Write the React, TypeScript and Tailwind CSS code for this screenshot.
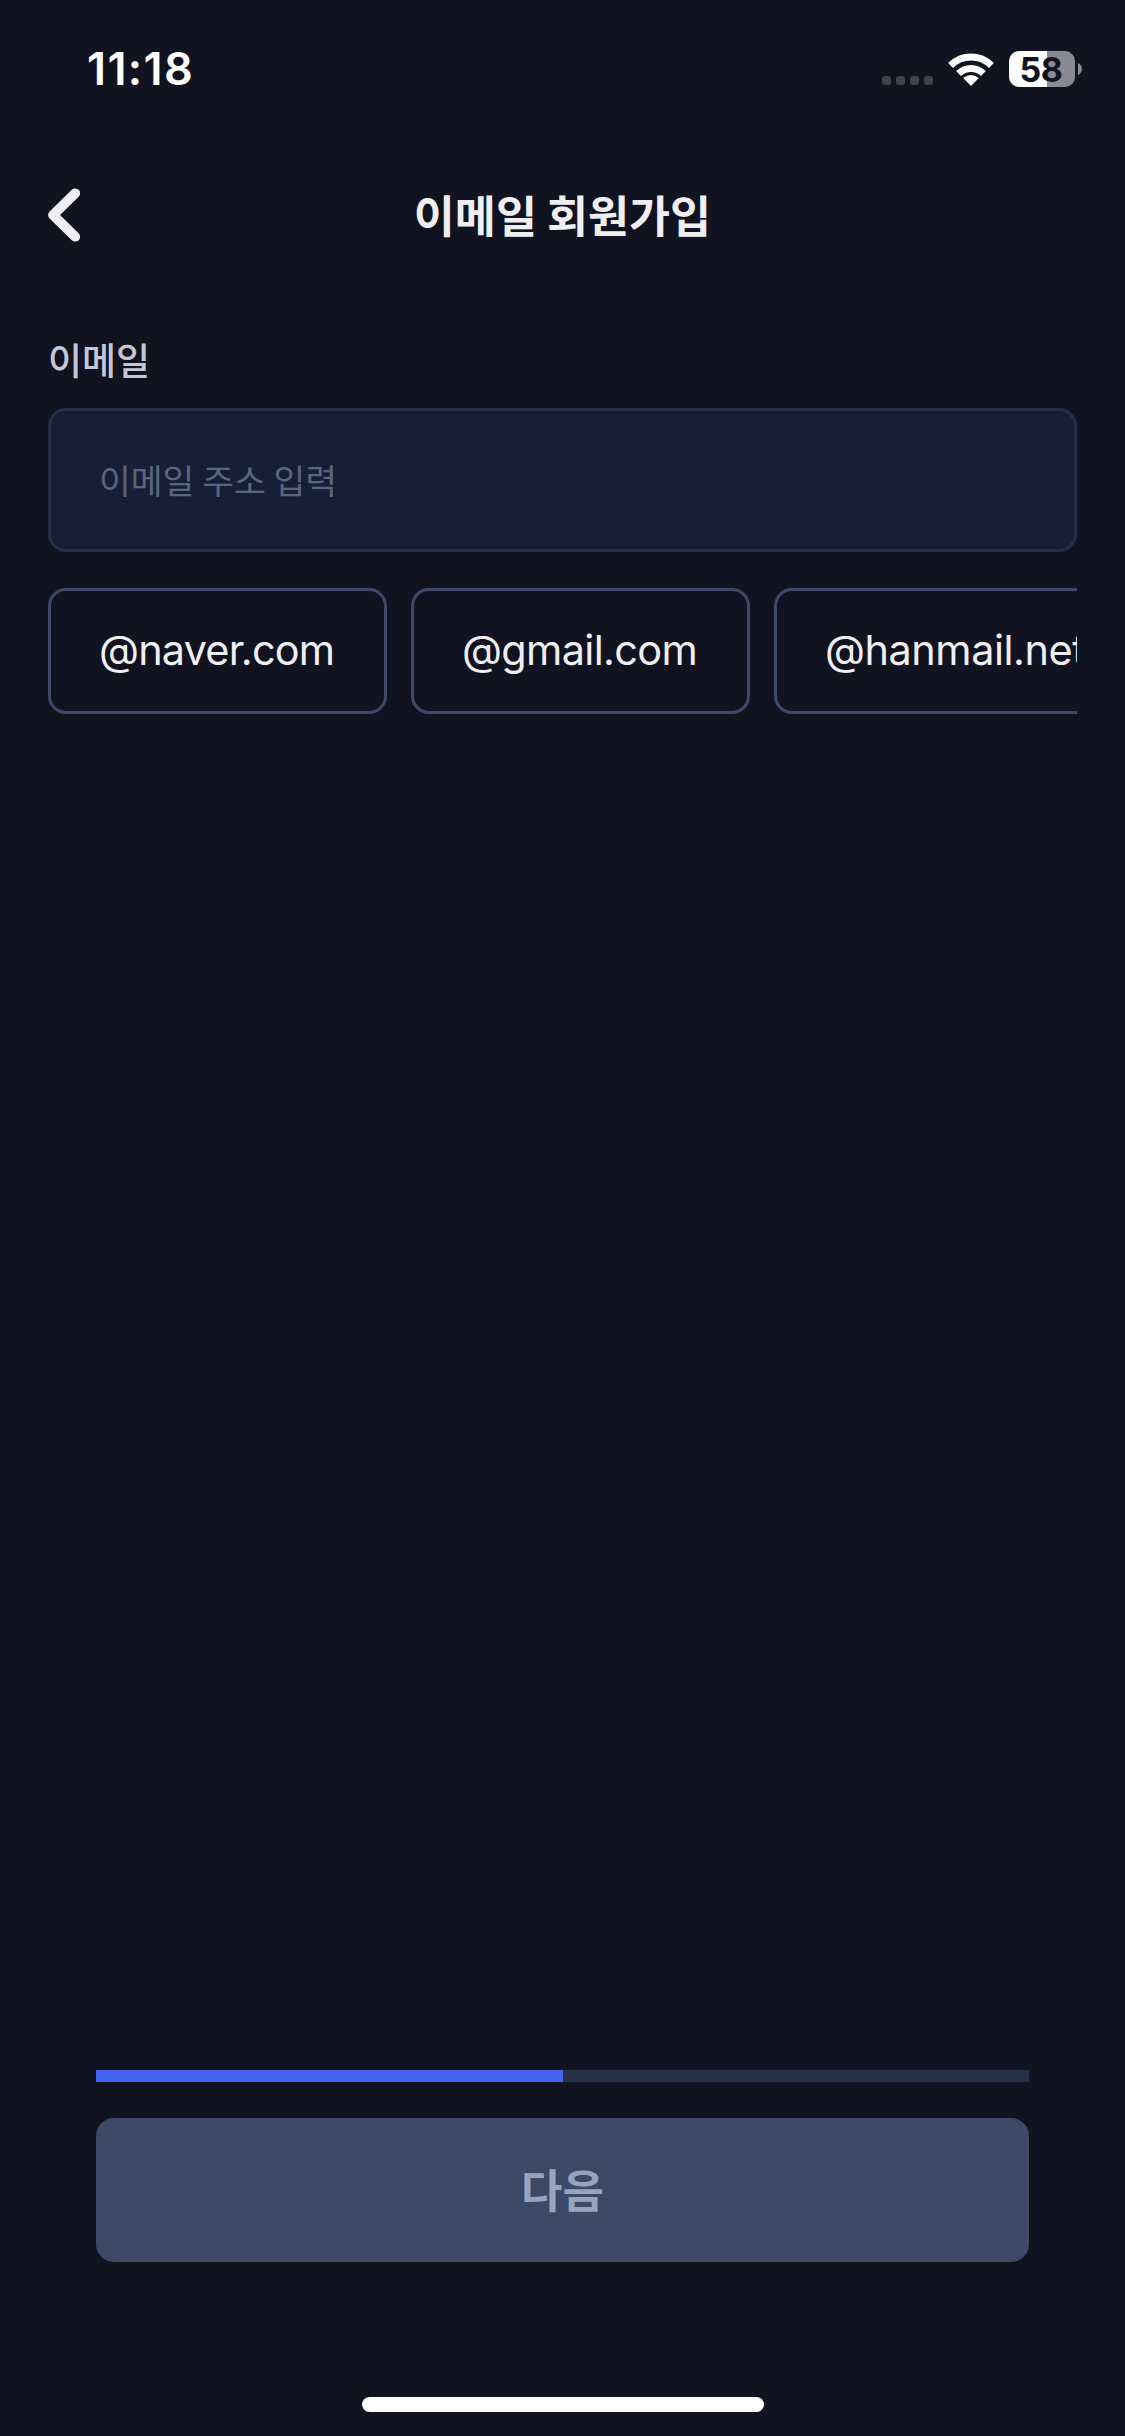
import { useState } from "react";

const DOMAINS = [
  { name: "@naver.com", className: "w-[339px] tracking-[-0.8px]" },
  { name: "@gmail.com", className: "w-[339px] tracking-[-0.65px]" },
  { name: "@hanmail.net", className: "w-[390px] tracking-[-0.45px]" },
];

function WifiIcon() {
  return (
    <svg className="ml-[15px] h-[33px] w-[46px]" viewBox="0 0 46 33" fill="none">
      <path d="M2.6 12.4 C14 1.2 32 1.2 43.4 12.4" stroke="white" strokeWidth="7" />
      <path d="M10.6 20.6 C17.6 13.8 28.4 13.8 35.4 20.6" stroke="white" strokeWidth="7" />
      <path
        d="M23 32.2 L16 25.1 C20 21.8 26 21.8 30 25.1 Z"
        fill="white"
        stroke="white"
        strokeWidth="1.2"
        strokeLinejoin="round"
      />
    </svg>
  );
}

function StatusBar() {
  return (
    <div className="flex h-[138px] items-start justify-between pr-[43px] pl-[87px]">
      <span className="mt-[42px] font-['Inter',sans-serif] text-[45px] leading-[54px] font-semibold tracking-[1.4px] text-white">
        11:18
      </span>
      <div className="mt-[51px] flex h-9 items-center">
        <div className="flex gap-[5px] self-end pb-[2px]">
          {[0, 1, 2, 3].map((dot) => (
            <span key={dot} className="h-[9px] w-[9px] rounded-[3px] bg-[#41424e]" />
          ))}
        </div>
        <WifiIcon />
        <div className="ml-[15px] flex h-9 w-[66px] items-center justify-center rounded-[10px] bg-linear-to-r from-white from-[58%] to-[#8a8a92] to-[58%]">
          <span className="pt-px pr-[2px] font-['Inter',sans-serif] text-[34px] leading-9 font-bold tracking-[-0.5px] text-[#111320]">
            58
          </span>
        </div>
        <svg className="ml-[3px] h-3 w-1" viewBox="0 0 4 12">
          <path d="M0 0 C5.3 2 5.3 10 0 12 Z" fill="#8a8a92" />
        </svg>
      </div>
    </div>
  );
}

export default function App() {
  const [email, setEmail] = useState("");

  const handleDomain = (domain: string) => {
    setEmail(email.split("@")[0] + domain);
  };

  return (
    <div className="flex h-[2436px] w-[1125px] flex-col bg-[#111320] font-['Noto_Sans_CJK_KR',sans-serif]">
      <StatusBar />

      <header className="grid h-[153px] grid-cols-[1fr_auto_1fr] items-center px-12">
        <button type="button" className="w-8">
          <svg className="h-14 w-8" viewBox="0 0 32 56" fill="none">
            <path
              d="M27.2 6.3 L5 28 L27.2 49.7"
              stroke="#efeff3"
              strokeWidth="9.8"
              strokeLinecap="round"
              strokeLinejoin="round"
            />
          </svg>
        </button>
        <h1 className="pb-px text-[44.6px] leading-[60px] font-bold text-[#efeff3]">이메일 회원가입</h1>
      </header>

      <main className="flex flex-1 flex-col px-12">
        <label htmlFor="email" className="mt-[41px] text-[37px] leading-[54px] font-medium text-[#c4c7d8]">
          이메일
        </label>
        <input
          id="email"
          value={email}
          onChange={(e) => setEmail(e.target.value)}
          placeholder="이메일 주소 입력"
          className="mt-[22px] h-36 w-full shrink-0 rounded-[18px] border-[3px] border-[#262f48] bg-[#171f37] px-12 pb-[3px] text-[34.6px] text-[#efeff3] outline-none placeholder:text-[#586680]"
        />
        <div className="mt-9 flex gap-6 overflow-hidden">
          {DOMAINS.map((domain) => (
            <button
              key={domain.name}
              type="button"
              onClick={() => handleDomain(domain.name)}
              className={`h-[126px] shrink-0 rounded-[18px] border-[3px] border-[#3d4967] pb-px pl-12 text-left font-['Inter',sans-serif] text-[41.4px] text-[#efeff3] ${domain.className}`}
            >
              {domain.name}
            </button>
          ))}
        </div>
      </main>

      <footer className="flex flex-col px-24 pb-[135px]">
        <div className="h-3 bg-[#253049]">
          <div className="h-full w-1/2 bg-[#4563ee]" />
        </div>
        <button
          type="button"
          className="mt-9 h-36 rounded-[18px] bg-[#3d4967] pb-[3px] text-[45px] font-bold text-[#97a4bf]"
        >
          다음
        </button>
      </footer>
      <div className="mb-6 ml-[362px] h-[15px] w-[402px] rounded-full bg-white" />
    </div>
  );
}
